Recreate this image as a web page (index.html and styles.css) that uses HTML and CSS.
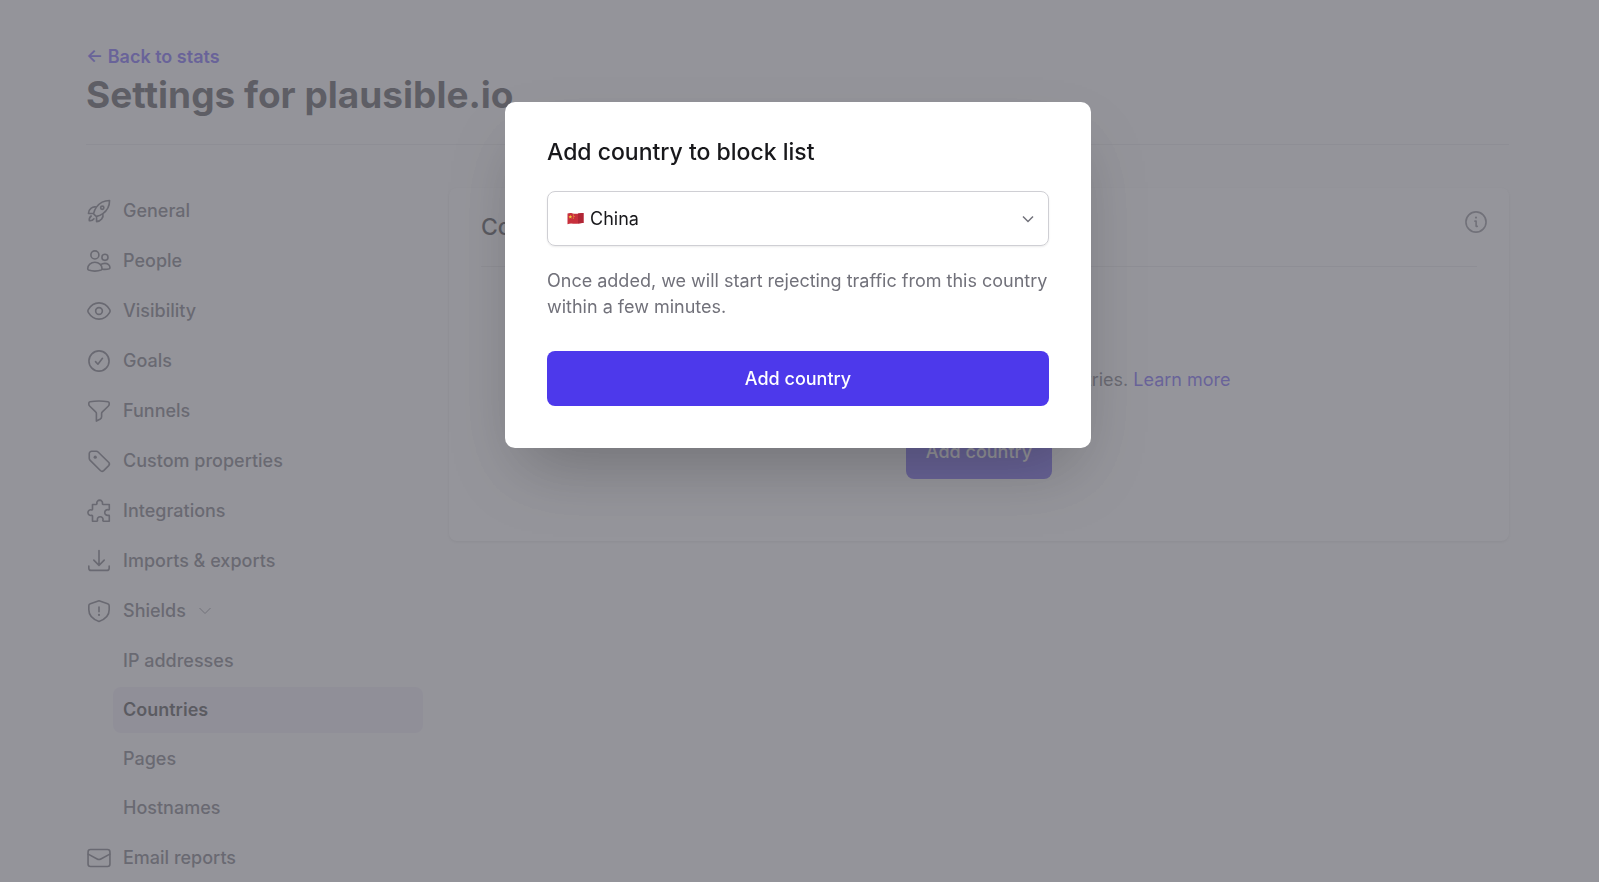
FILE: index.html
```html
<!DOCTYPE html>
<html lang="en">
<head>
    <meta charset="UTF-8">
    <meta name="viewport" content="width=device-width, initial-scale=1.0">
    <title>Settings for plausible.io</title>
    <link rel="stylesheet" href="styles.css">
</head>
<body>
    <div class="page">
        <header class="page-header">
            <a href="#" class="back-link">← Back to stats</a>
            <h1>Settings for plausible.io</h1>
        </header>

        <div class="layout">
            <nav class="sidebar">
                <a href="#" class="nav-item">
                    <svg class="icon" viewBox="0 0 24 24"><path d="M15.59 14.37a6 6 0 0 1-5.84 7.38v-4.8m5.84-2.58a14.98 14.98 0 0 0 6.16-12.12A14.98 14.98 0 0 0 9.631 8.41m5.96 5.96a14.926 14.926 0 0 1-5.841 2.58m-.119-8.54a6 6 0 0 0-7.381 5.84h4.8m2.581-5.84a14.927 14.927 0 0 0-2.58 5.84m2.699 2.7c-.103.021-.207.041-.311.06a15.09 15.09 0 0 1-2.448-2.448 14.9 14.9 0 0 1 .06-.312m-2.24 2.39a4.493 4.493 0 0 0-1.757 4.306 4.493 4.493 0 0 0 4.306-1.758M16.5 9a1.5 1.5 0 1 1-3 0 1.5 1.5 0 0 1 3 0Z"/></svg>
                    General
                </a>
                <a href="#" class="nav-item">
                    <svg class="icon" viewBox="0 0 24 24"><circle cx="8.2" cy="6.4" r="3.7"/><circle cx="17.5" cy="8.6" r="2.8"/><path d="M8.2 13.2c-3.8 0-6.6 2.7-6.6 6 0 .6.3 1 .8 1.2 1.7.6 3.7.9 5.8.9s4.1-.3 5.8-.9c.5-.2.8-.6.8-1.2 0-3.3-2.8-6-6.6-6Z"/><path d="M13.6 15.4c.9-.8 2.3-1.2 3.8-1.2 2.8 0 4.7 1.8 4.7 4 0 .5-.2.8-.6 1-1.9.6-4.3.7-6.6.4"/></svg>
                    People
                </a>
                <a href="#" class="nav-item">
                    <svg class="icon" viewBox="0 0 24 24"><path d="M2.1 13.3c-.5-.8-.5-1.8 0-2.6C4.4 6.9 8.1 4.5 12 4.5s7.6 2.4 9.9 6.2c.5.8.5 1.8 0 2.6-2.3 3.8-6 6.2-9.9 6.2s-7.6-2.4-9.9-6.2Z"/><circle cx="12" cy="12" r="3.1"/></svg>
                    Visibility
                </a>
                <a href="#" class="nav-item">
                    <svg class="icon" viewBox="0 0 24 24"><circle cx="12" cy="12" r="9.3"/><path d="m8.8 12.6 2.2 2.4 4.2-5.5"/></svg>
                    Goals
                </a>
                <a href="#" class="nav-item">
                    <svg class="icon" viewBox="0 0 24 24"><path d="M12 2.8c2.9 0 5.6.2 8.3.6.6.1 1.1.7 1.1 1.3v1.1c0 .6-.3 1.2-.7 1.6l-5.6 5.4c-.4.4-.7 1-.7 1.6v3c0 .9-.5 1.6-1.2 2L9.600 21.300v-6.900c0-.6-.2-1.200-.7-1.600L3.300 7.400c-.4-.4-.7-1-.7-1.600V4.700c0-.6.5-1.200 1.100-1.300 2.700-.4 5.400-.6 8.300-.6Z"/></svg>
                    Funnels
                </a>
                <a href="#" class="nav-item">
                    <svg class="icon" viewBox="0 0 24 24"><path d="M9.568 3H5.25A2.25 2.25 0 0 0 3 5.25v4.318c0 .597.237 1.17.659 1.591l9.581 9.581c.9.9 2.2.9 3.1.1l4.6-4.6c.8-.9.8-2.2-.1-3.1L11.16 3.66A2.25 2.25 0 0 0 9.568 3Z"/><circle class="dot" cx="8.5" cy="8.5" r="1.5"/></svg>
                    Custom properties
                </a>
                <a href="#" class="nav-item">
                    <svg class="icon" viewBox="0 0 24 24"><path d="M6 6h3.4c.5 0 .7-.5.6-.9A2.7 2.7 0 0 1 12.6 2a2.7 2.7 0 0 1 2.6 3.1c-.1.4.1.9.6.9h5.7v4.3c0 .5-.5.7-.9.6a2.6 2.6 0 1 0 0 5c.4-.1.9.1.9.6v5h-5.3c-.5 0-.7-.5-.6-.9a2.6 2.6 0 1 0-5 0c.1.4-.1.9-.6.9H6v-4.9c0-.5-.5-.7-.9-.6a2.6 2.6 0 1 1 0-5c.4.1.9-.1.9-.6Z"/></svg>
                    Integrations
                </a>
                <a href="#" class="nav-item">
                    <svg class="icon" viewBox="0 0 24 24"><path d="M12 2.4v13.4m-4.8-4.6 4.8 4.8 4.8-4.8M2.6 16.6v2c0 1.2.9 2.1 2.1 2.1h14.6c1.2 0 2.1-.9 2.1-2.1v-2"/></svg>
                    Imports &amp; exports
                </a>
                <a href="#" class="nav-item">
                    <svg class="icon" viewBox="0 0 24 24"><path d="m12 2.5 8 2.8c.8.3 1.4 1 1.4 1.9v3.6c0 5.9-4 8.9-9.4 10.8-5.4-1.9-9.4-4.9-9.4-10.8V7.2c0-.9.6-1.6 1.4-1.9ZM12 8.4v4.2"/><circle class="dot" cx="12" cy="15.6" r="1"/></svg>
                    Shields
                    <svg class="nav-chevron" viewBox="0 0 16 16"><path d="m2.5 5 5.5 5.5L13.5 5"/></svg>
                </a>
                <div class="subnav">
                    <a href="#" class="nav-item">IP addresses</a>
                    <a href="#" class="nav-item active">Countries</a>
                    <a href="#" class="nav-item">Pages</a>
                    <a href="#" class="nav-item">Hostnames</a>
                </div>
                <a href="#" class="nav-item">
                    <svg class="icon" viewBox="0 0 24 24"><rect x="1.9" y="4.2" width="20.2" height="15.6" rx="2.2"/><path d="m2 8.4 8.3 4.5c1 .6 2.3.6 3.4 0L22 8.4"/></svg>
                    Email reports
                </a>
            </nav>

            <main class="card">
                <div class="card-header">
                    <h2>Countries</h2>
                    <a href="#" class="info-link" aria-label="Documentation">
                        <svg class="icon" viewBox="0 0 24 24"><circle cx="12" cy="12" r="9.3"/><path d="M11 11.2h1.1v4.8h1.1"/><circle class="dot" cx="12" cy="7.9" r="1"/></svg>
                    </a>
                </div>
                <div class="card-body">
                    <p>Stop counting site visits from certain countries. <a href="#">Learn more</a></p>
                    <button type="button" class="btn">Add country</button>
                </div>
            </main>
        </div>
    </div>

    <div class="overlay">
        <form class="modal" role="dialog" aria-labelledby="modalTitle">
            <h2 id="modalTitle">Add country to block list</h2>
            <div class="select-box">
                <svg class="flag" viewBox="0 0 17 13"><path fill="#c8303c" d="M.5 1.6c3-1.4 5.3.2 8 .2s5-1.2 8-.8v10c-3-.4-5.3.8-8 .8s-5-.8-8 .4Z"/><path fill="#b02636" d="M11 1.4c2-.4 3.5-.6 5.500-.4v10c-2-.2-3.500 0-5.500.4Z"/><path fill="#f6d13c" d="m3.300 3 .6 1.200 1.300.1-1 .9.300 1.300-1.200-.7-1.100.7.300-1.300-1-.9 1.300-.1Z"/><circle fill="#f6d13c" cx="6.3" cy="3" r=".5"/><circle fill="#f6d13c" cx="7" cy="4.5" r=".5"/><circle fill="#f6d13c" cx="6.3" cy="6" r=".5"/></svg>
                <select id="country" aria-label="Country">
                    <option>China</option>
                </select>
                <svg class="select-chevron" viewBox="0 0 16 16"><path d="m3 5.5 5 5 5-5"/></svg>
            </div>
            <p>Once added, we will start rejecting traffic from this country within a few minutes.</p>
            <button type="button" class="btn btn-block">Add country</button>
        </form>
    </div>
</body>
</html>
```
FILE: styles.css
```css
* {
    margin: 0;
    padding: 0;
    box-sizing: border-box;
}

body {
    background: #fafafa;
    color: #18181b;
    font-family: Inter, 'Liberation Sans', sans-serif;
    font-size: 18px;
    line-height: 26px;
    height: 100vh;
    overflow: hidden;
}

a {
    color: #4f39f6;
    text-decoration: none;
}

.page {
    padding: 44px 90px 0 86px;
}

.page-header {
    border-bottom: 1px solid #e4e4e7;
    padding-bottom: 24px;
    margin-bottom: 43px;
}

.back-link {
    display: block;
    font-weight: 600;
}

h1 {
    color: #27272a;
    font-size: 37px;
    line-height: 50px;
    font-weight: 700;
}

.layout {
    display: grid;
    grid-template-columns: 337px 1fr;
    gap: 26px;
    align-items: start;
}

.sidebar {
    display: flex;
    flex-direction: column;
    gap: 4px;
}

.nav-item {
    display: flex;
    align-items: center;
    gap: 11px;
    height: 46px;
    border-radius: 8px;
    color: #52525b;
    font-weight: 500;
}

.subnav {
    display: flex;
    flex-direction: column;
    gap: 3px;
    margin-left: 27px;
}

.subnav .nav-item {
    padding: 0 10px;
}

.nav-item.active {
    background: #ebe7f4;
    color: #18181b;
    font-weight: 600;
}

.icon {
    width: 26px;
    height: 26px;
    fill: none;
    stroke: currentColor;
    stroke-width: 1.5;
    stroke-linecap: round;
    stroke-linejoin: round;
}

.icon .dot {
    fill: currentColor;
    stroke: none;
}

.nav-chevron {
    width: 16px;
    height: 16px;
    fill: none;
    stroke: #71717a;
    stroke-width: 1;
}

.card {
    background: #fff;
    border-radius: 8px;
    padding: 0 32px;
    box-shadow: 0 1px 3px rgba(0, 0, 0, 0.12);
}

.card-header {
    display: flex;
    justify-content: space-between;
    border-bottom: 1px solid #e4e4e7;
    padding: 23px 0;
}

.card-header h2 {
    font-size: 23px;
    line-height: 32px;
    font-weight: 500;
}

.info-link {
    color: #71717a;
    margin: -2px -12px 0 0;
    height: 26px;
}

.card-body {
    padding: 100px 0 62px;
    text-align: center;
    color: #52525b;
}

.card-body p {
    margin-bottom: 31px;
}

.btn {
    background: #4d39eb;
    color: #fff;
    border: none;
    border-radius: 8px;
    padding: 14px 20px;
    font-family: inherit;
    font-size: 18px;
    line-height: 27px;
    font-weight: 500;
    cursor: pointer;
}

.btn-block {
    display: block;
    width: 100%;
}

.overlay {
    position: fixed;
    inset: 0;
    background: rgba(113, 114, 121, 0.75);
    padding: 102px 3px 0 0;
}

.modal {
    background: #fff;
    max-width: 586px;
    margin: 0 auto;
    padding: 34px 42px 42px;
    border-radius: 10px;
    box-shadow: 0 32px 64px -16px rgba(0, 0, 0, 0.25);
}

.modal h2 {
    font-size: 23px;
    line-height: 32px;
    font-weight: 500;
    margin-bottom: 23px;
}

.modal p {
    color: #71717a;
    margin: 22px 0 31px;
}

.select-box {
    display: flex;
    align-items: center;
    gap: 6px;
    border: 1px solid #cfcfd4;
    border-radius: 8px;
    padding: 0 12px 0 19px;
    box-shadow: 0 1px 2px rgba(0, 0, 0, 0.08);
}

.select-box select {
    flex: 1;
    height: 53px;
    border: none;
    outline: none;
    background: none;
    appearance: none;
    color: #18181b;
    font-family: inherit;
    font-size: 18px;
}

.flag {
    width: 17px;
    height: 13px;
}

.select-chevron {
    width: 16px;
    height: 16px;
    fill: none;
    stroke: #71717a;
    stroke-width: 1.5;
}
```
